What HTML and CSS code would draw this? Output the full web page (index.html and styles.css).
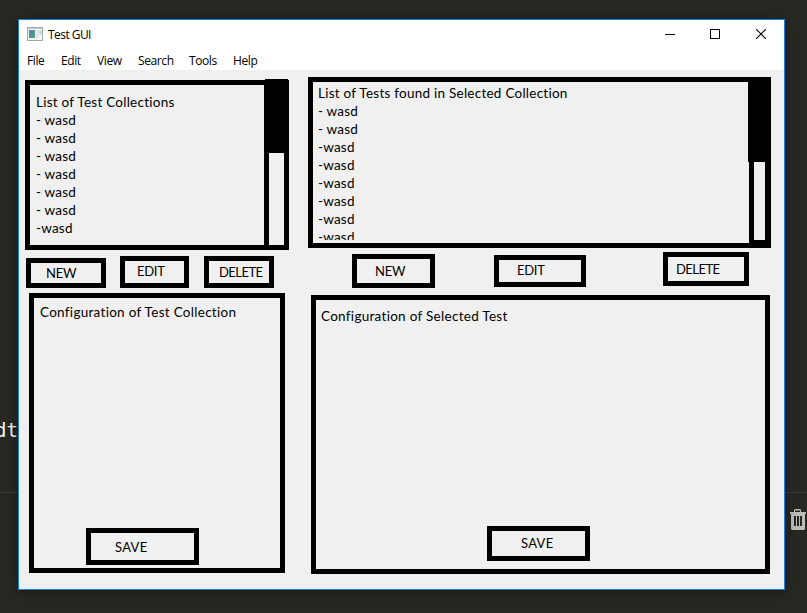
FILE: index.html
```html
<!DOCTYPE html>
<html lang="en">
<head>
<meta charset="utf-8">
<title>Test GUI</title>
<link rel="stylesheet" href="styles.css">
</head>
<body>
<div class="editor">
  <div class="code">dt</div>
  <div class="panel-bar">
    <svg class="trash" width="17" height="21" viewBox="0 0 17 21">
      <path fill="#bdbdbb" fill-rule="evenodd" d="M5 0h5l1 1v2h5v2H15v15l-1 1H2l-1-1V5H0V3h4V1zM5 1.500V3h5V1.500zM4 7v10h2V7zM7 7v10h2V7zM10 7v10h2V7z"/>
    </svg>
  </div>
</div>

<main class="window">
  <header class="titlebar">
    <svg class="app-icon" width="16" height="14" viewBox="0 0 16 14">
      <defs><linearGradient id="g" x1="0" y1="0" x2="1" y2="1"><stop offset="0" stop-color="#4f80b0"/><stop offset="1" stop-color="#53a77a"/></linearGradient></defs>
      <rect x=".5" y=".5" width="15" height="13" fill="#f4f5f6" stroke="#a4a9ae"/>
      <path d="M1 1.500h14" stroke="#c4c9ce"/>
      <rect x="2" y="3" width="6" height="8" fill="url(#g)"/>
      <rect x="9" y="3" width="3" height="8" fill="#e2e5e8"/>
      <rect x="12.500" y="3" width="2" height="5" fill="#b9dccb"/>
    </svg>
    <span class="title">Test GUI</span>
    <div class="controls">
      <svg width="10" height="10" viewBox="0 0 10 10"><path d="M0 5.500h10" stroke="#000"/></svg>
      <svg width="10" height="10" viewBox="0 0 10 10"><rect x=".5" y=".5" width="9" height="9" fill="none" stroke="#000"/></svg>
      <svg width="10" height="10" viewBox="0 0 10 10"><path d="M0 0l10 10M10 0L0 10" stroke="#000" stroke-width="1.100"/></svg>
    </div>
  </header>
  <nav class="menu">
    <span>File</span><span>Edit</span><span>View</span><span>Search</span><span>Tools</span><span>Help</span>
  </nav>

  <div class="content">
    <section class="col collections">
      <div class="list">
        <div class="items">
          <div class="heading">List of Test Collections</div>
          <div>- wasd</div><div>- wasd</div><div>- wasd</div><div>- wasd</div><div>- wasd</div><div>- wasd</div>
          <div>-wasd</div>
        </div>
        <div class="scroll"><div class="thumb"></div></div>
      </div>
      <div class="buttons">
        <div class="btn new">NEW</div><div class="btn edit">EDIT</div><div class="btn delete">DELETE</div>
      </div>
      <div class="config">
        <div class="heading">Configuration of Test Collection</div>
        <div class="btn save">SAVE</div>
      </div>
    </section>
    <section class="col tests">
      <div class="list">
        <div class="items">
          <div class="heading">List of Tests found in Selected Collection</div>
          <div>- wasd</div><div>- wasd</div>
          <div>-wasd</div><div>-wasd</div><div>-wasd</div><div>-wasd</div><div>-wasd</div><div>-wasd</div>
        </div>
        <div class="scroll"><div class="thumb"></div></div>
      </div>
      <div class="buttons">
        <div class="btn new">NEW</div><div class="btn edit">EDIT</div><div class="btn delete">DELETE</div>
      </div>
      <div class="config">
        <div class="heading">Configuration of Selected Test</div>
        <div class="btn save">SAVE</div>
      </div>
    </section>
  </div>
</main>
</body>
</html>
```
FILE: styles.css
```css
* { box-sizing: border-box; }
body {
  margin: 0;
  width: 807px;
  height: 613px;
  overflow: hidden;
  background: #272822;
  position: relative;
}
svg { display: block; }

.editor { display: flex; flex-direction: column; height: 613px; }
.code {
  height: 492px;
  padding-top: 418px;
  margin-left: -5px;
  font: 19px/24px "DejaVu Sans Mono", monospace;
  color: #f8f8f2;
}
.panel-bar {
  flex: 1;
  display: flex;
  justify-content: flex-end;
  align-items: flex-start;
  border-top: 1px solid #3c3d38;
  padding: 16px 0 0;
}

.window {
  position: absolute;
  left: 18px;
  top: 19px;
  width: 767px;
  height: 571px;
  border: 1px solid #1a7fdb;
  background: #f0f0f0;
  box-shadow: 0 3px 14px rgba(0, 0, 0, .35);
  color: #000;
}
.titlebar {
  display: flex;
  align-items: center;
  height: 28px;
  padding: 0 18px 0 8px;
  background: #fff;
}
.title { margin: 1px 0 0 5px; font: 12px/16px "Open Sans", sans-serif; letter-spacing: -.55px; }
.controls { display: flex; gap: 35px; margin-left: auto; }
.controls svg:last-child { margin-left: 1px; }
.menu {
  display: grid;
  grid-template-columns: 34px 36px 41px 51px 44px 40px;
  height: 22px;
  padding: 4px 8px 0;
  background: #fff;
  font: 12px/17px "Open Sans", sans-serif;
  letter-spacing: -.4px;
}

.content {
  display: flex;
  align-items: flex-start;
  font: 13.500px/18px Lato, sans-serif;
  font-variant-ligatures: none;
  letter-spacing: .2px;
}
.heading { letter-spacing: .25px; }
.config .heading { letter-spacing: .29px; }
.col { display: flex; flex-direction: column; }
.collections { width: 264px; margin: 10px 0 0 6px; }
.tests { width: 463px; margin: 7px 0 0 19px; }

.list { display: flex; border: 5px solid #000; white-space: nowrap; }
.items { flex: 1; overflow: hidden; }
.scroll { border-left: 5px solid #000; }
.thumb { background: #000; }
.collections .list { height: 170px; }
.collections .items { padding: 8px 0 0 6px; }
.collections .scroll { width: 20px; }
.collections .thumb { height: 74px; margin: -6px 0 0 -4px; width: 23px; }
.tests .list { height: 171px; border-right-width: 6px; }
.tests .items { height: 158px; padding: 2px 0 0 5px; }
.tests .scroll { width: 16px; border-bottom: 3px solid #000; }
.tests .thumb { height: 80px; margin-left: -6px; width: 17px; }

.buttons { display: flex; align-items: flex-start; }
.btn { border: 5px solid #000; font-size: 13px; white-space: nowrap; }
.new { letter-spacing: -.25px; }
.edit { letter-spacing: -.3px; }
.delete { letter-spacing: -.55px; }
.save { letter-spacing: .3px; }
.collections .buttons { height: 43px; padding: 6px 0 0 1px; }
.collections .new { width: 80px; height: 30px; margin-top: 2px; padding: 1px 0 0 15px; }
.collections .edit { width: 69px; height: 32px; margin-left: 14px; padding: 1px 0 0 12px; }
.collections .delete { width: 70px; height: 32px; margin-left: 15px; padding: 2px 0 0 10px; }
.tests .buttons { height: 47px; padding: 4px 0 0 44px; }
.tests .new { width: 83px; height: 34px; margin-top: 2px; padding: 3px 0 0 18px; }
.tests .edit { width: 92px; height: 32px; margin: 3px 0 0 59px; padding: 1px 0 0 18px; }
.tests .delete { width: 86px; height: 34px; margin-left: 77px; padding: 3px 0 0 8px; }

.config { display: flex; flex-direction: column; align-items: flex-start; border: 5px solid #000; white-space: nowrap; }
.collections .config { width: 256px; height: 280px; margin-left: 4px; padding: 5px 0 3px 6px; }
.tests .config { width: 459px; height: 279px; margin-left: 3px; padding: 7px 0 8px 5px; }
.config .btn { margin-top: auto; }
.collections .save { width: 113px; height: 37px; margin-left: 46px; padding: 5px 0 0 24px; }
.tests .save { width: 103px; height: 35px; margin-left: 166px; padding: 3px 0 0 29px; }
```
